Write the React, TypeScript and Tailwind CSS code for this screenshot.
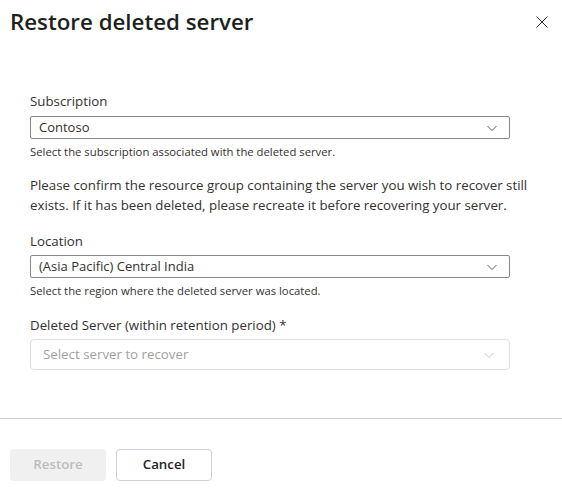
import React from "react";

function Chevron({ color }: { color: string }) {
  return (
    <svg width="12" height="12" viewBox="0 0 12 12" fill="none">
      <path d="M1.5 4 L6 8.5 L10.5 4" stroke={color} strokeWidth="1" />
    </svg>
  );
}

function Select({ value }: { value: string }) {
  return (
    <div className="flex h-[23px] w-[480px] items-center justify-between rounded-[2px] border border-[#8a8886] pl-[8px] pr-[11px] text-[13px] text-[#323130]">
      <span>{value}</span>
      <Chevron color="#605e5c" />
    </div>
  );
}

export default function App() {
  return (
    <div
      className="flex h-[495px] w-[562px] flex-col bg-white text-[#323130]"
      style={{ fontFamily: '"Open Sans", "Noto Sans", sans-serif' }}
    >
      <div className="flex items-start justify-between pl-[10px] pr-[14px] pt-[6px]">
        <h1 className="text-[22.3px] font-semibold leading-[32px] text-[#201f1e]">
          Restore deleted server
        </h1>
        <svg className="mt-[10px]" width="12" height="12" viewBox="0 0 12 12">
          <path d="M0.5 0.5 L11.5 11.5 M11.5 0.5 L0.5 11.5" stroke="#323130" strokeWidth="1" />
        </svg>
      </div>

      <div className="flex flex-col pl-[30px] pt-[53px]">
        <div className="text-[13.3px] leading-[20px]">Subscription</div>
        <div className="mt-[5px]">
          <Select value="Contoso" />
        </div>
        <div className="mt-[5px] text-[11.3px] leading-[16px]">
          Select the subscription associated with the deleted server.
        </div>

        <div className="mt-[15px] w-[510px] text-[13.3px] leading-[20px]">
          Please confirm the resource group containing the server you wish to recover still exists. If it
          has been deleted, please recreate it before recovering your server.
        </div>

        <div className="mt-[16px] text-[13.3px] leading-[20px]">Location</div>
        <div className="mt-[4px]">
          <Select value="(Asia Pacific) Central India" />
        </div>
        <div className="mt-[5px] text-[11.3px] leading-[16px]">
          Select the region where the deleted server was located.
        </div>

        <div className="mt-[16px] text-[13.3px] leading-[20px]">Deleted Server (within retention period) *</div>
        <div className="mt-[4px] flex h-[31px] w-[480px] items-center justify-between rounded-[4px] border border-[#e1dfdd] pl-[12px] pr-[14px] text-[13.3px] text-[#a19f9d]">
          <span>Select server to recover</span>
          <Chevron color="#c8c6c4" />
        </div>
      </div>

      <div className="mt-[48px] h-px w-full bg-[#d2d0ce]" />

      <div className="flex gap-[10px] pl-[10px] pt-[30px]">
        <div className="flex h-[32px] w-[96px] items-center justify-center rounded-[4px] bg-[#f0f0f0] text-[13.3px] font-semibold text-[#bdbdbd]">
          Restore
        </div>
        <div className="flex h-[32px] w-[96px] items-center justify-center rounded-[4px] border border-[#d1d1d1] text-[13.3px] font-semibold text-[#242424]">
          Cancel
        </div>
      </div>
    </div>
  );
}
